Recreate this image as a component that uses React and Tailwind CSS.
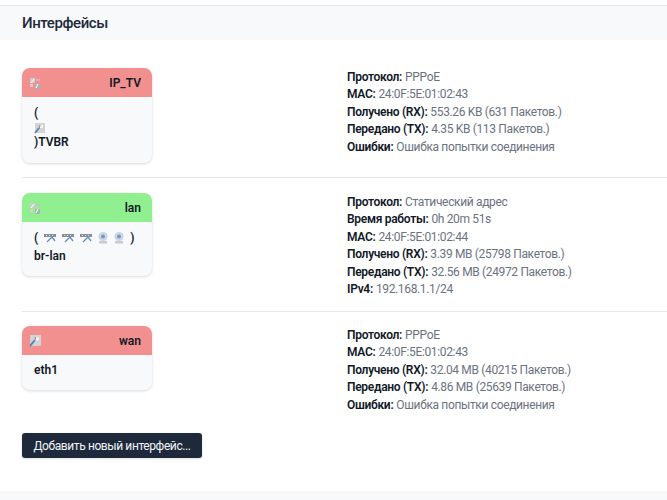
import React from "react";

// small network port icon, grey box with a blue cable
const PortIcon = ({ className = "w-[11px] h-[11px]" }) => (
  <svg viewBox="0 0 11 11" className={className}>
    <rect x="1" y="0" width="10" height="10" fill="#d4d4d4" />
    <rect x="6" y="2" width="3" height="3" fill="#f2f2f2" />
    <path d="M1 10 L5 5" stroke="#4a7fc4" strokeWidth="1.6" fill="none" />
    <path d="M5 6 L6 2" stroke="#8a8a8a" strokeWidth="1" fill="none" />
  </svg>
);

const AliasIcon = () => (
  <svg viewBox="0 0 12 12" className="w-3 h-3">
    <rect x="1" y="1" width="5" height="5" fill="#c9ccd0" />
    <rect x="7" y="2" width="4" height="2" fill="#d9b8b8" />
    <rect x="6" y="7" width="5" height="5" fill="#a9b0b8" />
    <rect x="1" y="7" width="3" height="3" fill="#e8c8c8" />
    <path d="M2 6 L5 2 M7 11 L9 7" stroke="#fff" strokeWidth="1" fill="none" />
  </svg>
);

const SwitchIcon = () => (
  <svg viewBox="0 0 12 10" className="w-3 h-[10px]">
    <rect x="0" y="1" width="12" height="3" fill="#8a8f96" />
    <rect x="2" y="2" width="1" height="1" fill="#e5e7eb" />
    <rect x="5" y="2" width="1" height="1" fill="#e5e7eb" />
    <rect x="8" y="2" width="1" height="1" fill="#e5e7eb" />
    <path d="M3 9 L8 4 L11 8" stroke="#5d8fcf" strokeWidth="1.3" fill="none" />
  </svg>
);

const WifiIcon = () => (
  <svg viewBox="0 0 10 12" className="w-[10px] h-3">
    <circle cx="5" cy="4.5" r="4.5" fill="#c4d6ea" />
    <circle cx="5" cy="4.5" r="2" fill="#8a97a6" />
    <rect x="1" y="9" width="8" height="2.5" fill="#c8ccd0" />
  </svg>
);

const interfaces = [
  {
    name: "IP_TV",
    color: "bg-[#f29090]",
    icon: <AliasIcon />,
    body: (
      <>
        <div className="leading-[17px]">(</div>
        <div className="h-[12px] flex items-center"><PortIcon /></div>
        <div className="leading-[17px]">)TVBR</div>
      </>
    ),
    bodyClass: "h-[66px] pt-[8px]",
    info: [
      ["Протокол", "PPPoE"],
      ["MAC", "24:0F:5E:01:02:43"],
      ["Получено (RX)", "553.26 KB (631 Пакетов.)"],
      ["Передано (TX)", "4.35 KB (113 Пакетов.)"],
      ["Ошибки", "Ошибка попытки соединения"],
    ],
    rowClass: "h-[109px]",
  },
  {
    name: "lan",
    color: "bg-[#90f090]",
    icon: <AliasIcon />,
    body: (
      <>
        <div className="flex items-center gap-[6px] h-[18px]">
          <span>(</span>
          <SwitchIcon />
          <SwitchIcon />
          <SwitchIcon />
          <WifiIcon />
          <WifiIcon />
          <span>)</span>
        </div>
        <div className="leading-[18px]">br-lan</div>
      </>
    ),
    bodyClass: "h-[54px] pt-[7px]",
    info: [
      ["Протокол", "Статический адрес"],
      ["Время работы", "0h 20m 51s"],
      ["MAC", "24:0F:5E:01:02:44"],
      ["Получено (RX)", "3.39 MB (25798 Пакетов.)"],
      ["Передано (TX)", "32.56 MB (24972 Пакетов.)"],
      ["IPv4", "192.168.1.1/24"],
    ],
    rowClass: "h-[134px] pt-[15px]",
  },
  {
    name: "wan",
    color: "bg-[#f29090]",
    icon: <PortIcon className="w-3 h-3" />,
    body: <div className="leading-[18px]">eth1</div>,
    bodyClass: "h-[35px] pt-[6px]",
    info: [
      ["Протокол", "PPPoE"],
      ["MAC", "24:0F:5E:01:02:43"],
      ["Получено (RX)", "32.04 MB (40215 Пакетов.)"],
      ["Передано (TX)", "4.86 MB (25639 Пакетов.)"],
      ["Ошибки", "Ошибка попытки соединения"],
    ],
    rowClass: "pt-[14px]",
  },
];

const App = () => {
  return (
    <div className="w-[667px] h-[500px] overflow-hidden bg-white pt-[5px] font-['Roboto','Noto_Sans',sans-serif] text-[12px] text-[#111827]">
      <div className="h-[35px] flex items-center pl-[22px] bg-[#f8f9fb] border-t border-[#e5e7eb]">
        <h2 className="text-[15px] font-medium tracking-[-0.4px] text-[#1e293b]">Интерфейсы</h2>
      </div>

      <div className="pl-[22px] pt-[28px] border-l border-[#f3f4f6] h-[451px] -ml-px">
        {interfaces.map((item, i) => (
          <div
            key={item.name}
            className={`flex ${i > 0 ? "border-t border-[#e5e7eb]" : ""} ${item.rowClass}`}
          >
            <div className="w-[130px] self-start rounded-lg overflow-hidden bg-[#f8f9fb] shadow-[0_1px_3px_rgba(0,0,0,0.15)] font-semibold">
              <div className={`h-[29px] flex items-center justify-between pl-[7px] pr-[11px] ${item.color}`}>
                {item.icon}
                <span className="text-[#111827]">{item.name}</span>
              </div>
              <div className={`pl-[12px] ${item.bodyClass}`}>{item.body}</div>
            </div>

            <div className="ml-[195px] pt-px leading-[17.4px]">
              {item.info.map(([label, value]) => (
                <div key={label} className="whitespace-nowrap">
                  <span className="font-semibold tracking-[-0.3px] text-[#111827]">{label}:</span>{" "}
                  <span className="tracking-[-0.35px] text-[#6b7280]">{value}</span>
                </div>
              ))}
            </div>
          </div>
        ))}

        <button className="block mt-[19px] w-[180px] h-[25px] rounded-[3px] bg-[#1e293b] text-[#f1f5f9] text-[12px] tracking-[-0.4px] text-center shadow-sm">
          Добавить новый интерфейс...
        </button>
      </div>

      <div className="h-[9px] bg-[#f8f9fb]" />
    </div>
  );
};

export default App;
